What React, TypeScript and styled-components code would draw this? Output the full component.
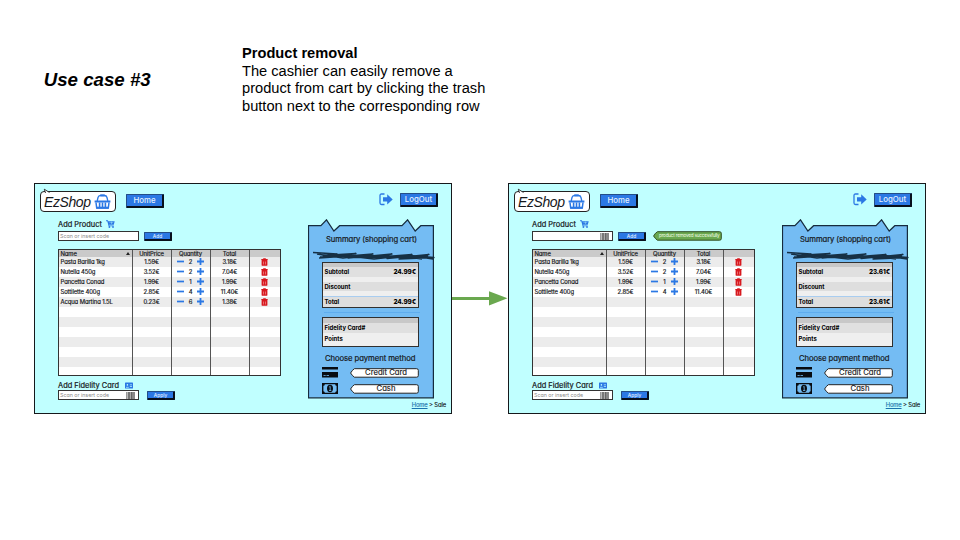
import React from "react";
import styled, { createGlobalStyle } from "styled-components";

const GlobalStyle = createGlobalStyle`
  html, body { margin: 0; background: #fff; overflow: hidden; }
  * { box-sizing: border-box; }
  svg { display: block; flex: none; }
`;

const BLUE = "#2b78e4";
const INK = "#16181b";

const Slide = styled.main`
  width: 960px;
  height: 540px;
  padding-left: 34px;
  font-family: "Liberation Sans", Arial, sans-serif;
  color: #000;
  background: #fff;
`;
const Intro = styled.header`
  display: grid;
  grid-template-columns: 208px 270px;
  height: 183px;
`;
const Title = styled.h1`
  margin: 69px 0 0 9.7px;
  font-size: 18.7px;
  line-height: 22px;
  font-style: italic;
  font-weight: 700;
  white-space: nowrap;
`;
const Description = styled.div`
  padding-top: 45px;
  font-size: 14.65px;
  line-height: 17.5px;
  white-space: nowrap;
`;
const Flow = styled.div`
  display: grid;
  grid-template-columns: 418px 56px 418px;
  height: 231px;
`;
const ArrowCell = styled.div`
  padding-top: 107px;
`;

const Screen = styled.section`
  display: grid;
  grid-template-rows: 35px 180px 14px;
  height: 231px;
  border: 1px solid ${INK};
  background: #c0ffff;
  font-family: Inter, "Noto Sans", sans-serif;
  font-feature-settings: "cv11" 1, "ss03" 1;
  color: ${INK};
  white-space: nowrap;
`;
const TopBar = styled.div`
  display: flex;
  align-items: flex-start;
  padding: 7px 13px 0 5px;
`;
const Logo = styled.div`
  position: relative;
  display: flex;
  align-items: center;
  width: 75.5px;
  height: 21px;
  padding-left: 3px;
  border: 1px solid #222;
  border-radius: 4px;
  background: #fff;
  font: italic 14px/20px "Liberation Sans", sans-serif;
  letter-spacing: -0.4px;
  svg { margin-left: 3px; }
`;
const Tail = styled.svg`
  position: absolute;
  left: -3px;
  top: -4px;
`;
const Button = styled.button<{ $w: number; $h: number; $size: number }>`
  width: ${(p) => p.$w}px;
  height: ${(p) => p.$h}px;
  padding: 0;
  border: solid;
  border-width: 1px 2px 2px 1px;
  border-color: #234e88 #08101c #08101c #234e88;
  border-radius: 1px;
  background: ${BLUE};
  color: #e6f1ff;
  font: 500 ${(p) => p.$size}px/1 Inter, sans-serif;
  font-feature-settings: inherit;
  display: flex;
  align-items: center;
  justify-content: center;
`;
const HomeSlot = styled.div`
  margin: 3px auto 0 10.500px;
`;
const ExitSlot = styled.div`
  display: flex;
  gap: 7px;
  padding-top: 2px;
`;
const Body = styled.div`
  display: grid;
  grid-template-columns: 223px 127px;
  column-gap: 27px;
  padding-left: 23px;
`;
const Caption = styled.div<{ $gap: number; $shift: number }>`
  display: flex;
  align-items: center;
  gap: ${(p) => p.$gap}px;
  height: 12px;
  font-size: 7.45px;
  -webkit-text-stroke: 0.2px ${INK};
  padding-top: ${(p) => Math.max(0, p.$shift)}px;
  padding-bottom: ${(p) => Math.max(0, -p.$shift)}px;
`;
const FieldRow = styled.div<{ $gap: number }>`
  display: flex;
  align-items: flex-end;
  gap: ${(p) => p.$gap}px;
  height: 10px;
`;
const Field = styled.div`
  display: flex;
  align-items: center;
  justify-content: space-between;
  width: 81px;
  height: 10px;
  padding: 0 3px 0 1px;
  border: 1px solid #333;
  border-right-width: 1.5px;
  background: #fff;
  color: #8b8b8b;
  font-size: 5.3px;
  line-height: 8px;
`;
const Barcode = styled.span`
  width: 9px;
  height: 7px;
  margin-left: auto;
  background: linear-gradient(90deg, #999 0 1px, #bbb 1px 2px, #777 2px 4px, #aaa 4px 5px, #666 5px 6px, #888 6px 9px);
`;
const Notice = styled.div`
  position: relative;
  width: 70px;
  height: 10px;
  margin-left: 2px;
  padding-left: 6px;
  color: #f3ffe9;
  font-size: 4.65px;
  letter-spacing: -0.21px;
  line-height: 9.5px;
  span { position: relative; }
  svg { position: absolute; left: 0; top: 0; }
`;
const Table = styled.div`
  display: grid;
  grid-template-rows: 7px;
  grid-auto-rows: 10px;
  width: 223px;
  height: 127px;
  margin: 8px 0 2px;
  overflow: hidden;
  border: 1px solid #333;
  border-right-width: 1.5px;
  background: #fff;
`;
const Row = styled.div<{ $tone: string }>`
  display: grid;
  grid-template-columns: 74px 39px 39px 39px 1fr;
  background: ${(p) => p.$tone};
  font-size: 5.9px;
  letter-spacing: -0.1px;
`;
const Cell = styled.div<{ $left?: boolean }>`
  display: flex;
  align-items: center;
  justify-content: ${(p) => (p.$left ? "space-between" : "center")};
  gap: 4px;
  padding: 0 2px ${(p) => (p.$left ? 1 : 0.8)}px ${(p) => (p.$left ? 1.5 : 1)}px;
  border-right: 1px solid #555;
  line-height: 7px;
  -webkit-text-stroke: 0.18px ${INK};
  &:last-child { border-right: 0; padding-right: 2px; }
`;
const Digit = styled.span`
  width: 5px;
  text-align: center;
`;

const Receipt = styled.div`
  position: relative;
  display: flex;
  flex-direction: column;
  width: 127px;
  height: 180px;
  padding: 0 14px 0 14px;
`;
const Backdrop = styled.svg`
  position: absolute;
  left: 0;
  top: 0;
`;
const ReceiptTitle = styled.div<{ $top: number; $spacing: number; $left: number }>`
  position: relative;
  height: 10px;
  margin: ${(p) => p.$top}px 0 0 ${(p) => p.$left}px;
  font-size: 7.7px;
  line-height: 10px;
  letter-spacing: ${(p) => p.$spacing}px;
  -webkit-text-stroke: 0.2px ${INK};
`;
const Sheet = styled.div<{ $top: number; $h: number; $bands: string }>`
  position: relative;
  width: 97px;
  height: ${(p) => p.$h}px;
  margin-top: ${(p) => p.$top}px;
  padding: 5px 2px 0 1.500px;
  border: 1px solid #303030;
  background: linear-gradient(${(p) => p.$bands});
  font-size: 5.95px;
  font-weight: 700;
`;
const SheetLine = styled.div<{ $h: number }>`
  display: flex;
  align-items: center;
  justify-content: space-between;
  height: ${(p) => p.$h}px;
  line-height: 8px;
  color: #000;
`;
const Amount = styled.b`
  font-size: 6.4px;
  letter-spacing: -0.1px;
  font-weight: 800;
`;
const PayRow = styled.div<{ $top: number }>`
  position: relative;
  display: flex;
  justify-content: space-between;
  align-items: center;
  height: 11px;
  width: 97px;
  margin-top: ${(p) => p.$top}px;
`;
const PayButton = styled.div`
  position: relative;
  width: 69px;
  height: 10px;
  padding-left: 3px;
  text-align: center;
  font-size: 7.7px;
  line-height: 9px;
  -webkit-text-stroke: 0.15px ${INK};
  span { position: relative; }
  svg { position: absolute; left: 0; top: 0; }
`;
const Crumbs = styled.div`
  padding: 2px 5px 0 0;
  text-align: right;
  font-size: 5.8px;
  line-height: 8px;
  letter-spacing: -0.1px;
  -webkit-text-stroke: 0.15px;
  a { color: #1b73ae; text-decoration: underline; }
`;

const Basket = () => (
  <svg width="17" height="16" viewBox="0 0 17 16" fill="none" stroke={BLUE}>
    <path d="M3.200 7 4 3.500Q4.500 1.500 6.500 1.500h4Q12.500 1.500 13 3.500L13.800 7" strokeWidth="1.300" />
    <path d="M6.300 1.400h4.400" strokeWidth="2" />
    <path d="M.6 7.500h15.800" strokeWidth="2" />
    <path d="M2 8.500 2.700 14h11.600l.7-5.500" strokeWidth="1.500" />
    <path d="M5.600 8.500v5M8.500 8.500v5M11.400 8.500v5" strokeWidth="1.600" />
    <path d="M2.500 13.700h12" strokeWidth="2" />
  </svg>
);
const Cart = () => (
  <svg width="9" height="8" viewBox="0 0 9 8" fill={BLUE}>
    <path d="M0 .3h1.900l.4 1H8.700L7.800 4.700H3.200l.2.700h4.300v.8H2.600L1.300 1.200H0z" />
    <circle cx="3.400" cy="7" r=".9" /><circle cx="7" cy="7" r=".9" />
    <path d="M3.400 2.600h3.800M5.500 1.600v2.500" stroke="#c0ffff" strokeWidth=".4" />
  </svg>
);
const Trash = () => (
  <svg width="7" height="8" viewBox="0 0 7 8">
    <path d="M2.200.3h2.600v.6H6.700v1.200H.3V.9h1.900zM.6 2h5.800v4.900q0 .9-.9.900H1.500q-.9 0-.9-.9z" fill="#d7191f" />
    <path d="M2.500 3.500v3M4.500 3.500v3" stroke="#f7a3a3" strokeWidth=".6" />
  </svg>
);
const Minus = () => (
  <svg width="7" height="7" viewBox="0 0 7 7"><path d="M0 3.500h7" stroke={BLUE} strokeWidth="1.700" /></svg>
);
const Plus = () => (
  <svg width="7" height="7" viewBox="0 0 7 7"><path d="M0 3.500h7M3.500 0v7" stroke={BLUE} strokeWidth="1.800" /></svg>
);
const Exit = () => (
  <svg width="14" height="13" viewBox="0 0 14 13">
    <path d="M5.500 1H2.500Q1 1 1 2.500v7.500Q1 11.500 2.500 11.500h3" fill="none" stroke={BLUE} strokeWidth="1.300" />
    <path d="M4 4.300h4.200V1.300L13.700 6.400 8.200 11.500V8.500H4z" fill={BLUE} />
  </svg>
);
const IdCard = () => (
  <svg width="8" height="7" viewBox="0 0 8 7">
    <rect y=".5" width="8" height="6" rx=".6" fill={BLUE} />
    <circle cx="2.400" cy="2.900" r=".8" fill="#c0ffff" />
    <path d="M1 5.300h2.800M4.800 2.800H7M4.800 4.500H7" stroke="#c0ffff" strokeWidth=".7" />
  </svg>
);
const CreditCard = () => (
  <svg width="16" height="11" viewBox="0 0 16 11">
    <path d="M0 0h16V2.500H0zM0 5h16v5.500H0z" fill="#080c12" />
    <path d="M1.500 8.500h2.200M4.500 8.500h2.500" stroke="#74bcf3" strokeWidth=".8" />
  </svg>
);
const Banknote = () => (
  <svg width="16" height="11" viewBox="0 0 16 11">
    <rect width="16" height="11" fill="#080c12" />
    <path d="M2.800 1.300h10.400q0 1.500 1.400 1.500v5.400q-1.400 0-1.400 1.500H2.800q0-1.500-1.400-1.500V2.800q1.400 0 1.400-1.500z" fill="#74bcf3" />
    <ellipse cx="8" cy="5.500" rx="3" ry="3.700" fill="#080c12" />
    <path d="M7.200 4 8.200 3.400v4M7 7.500h2.300" fill="none" stroke="#74bcf3" strokeWidth=".8" />
  </svg>
);
const Tag = ({ fill, stroke }: { fill: string; stroke: string }) => (
  <svg width="69" height="10" viewBox="0 0 70 10" preserveAspectRatio="none">
    <path d="M4.500.7H67.500Q69.300.7 69.300 2.300V7.700Q69.300 9.200 67.500 9.200H4.500Q2.500 8 .6 5 2.500 1.800 4.500.7z" fill={fill} stroke={stroke} />
  </svg>
);
const ReceiptPaper = () => (
  <Backdrop width="127" height="180" viewBox="0 0 127 180">
    <path d="M.5 6.700H12.900L18.500.8 25.900 12 31.600 6.700H94L99.600.8 107.200 12 112.800 6.700H125.400V178.800H.5z" fill="#74bcf3" stroke="#162b3d" strokeWidth="1.200" />
    <path d="M16 93.500H112" stroke="#4b9fea" strokeWidth=".7" opacity=".7" />
    <path d="M5 33.500 29 35 15 36.500 48 34.500 26 38 65 35 40 39 84 35 57 39 104 35.500 79 39.500 121 35.500 91 40 126 38.500 102 36.500 125 40M11 39 40 37 66 40 93 37 114 40M9 35 35 39 60 36 80 38 110 37 126 40M12 38 30 36.500 50 38.500 75 36.500 100 38.500 120 37" fill="none" stroke="#163044" strokeWidth="1.300" strokeLinejoin="round" />
  </Backdrop>
);

type Item = [string, string, string, string];
const cart: Item[] = [
  ["Pasta Barilla 1kg", "1.59€", "2", "3.18€"],
  ["Nutella 450g", "3.52€", "2", "7.04€"],
  ["Pancetta Conad", "1.99€", "1", "1.99€"],
  ["Sottilette 400g", "2.85€", "4", "11.40€"],
  ["Acqua Martina 1.5L", "0.23€", "6", "1.38€"],
];

function SaleScreen({ items, total, removed }: { items: Item[]; total: string; removed?: boolean }) {
  return (
    <Screen>
      <TopBar>
        <Logo>
          <Tail width="9" height="8" viewBox="0 0 9 8">
            <path d="M4.500 5 3.300 1.200 8.500 4.500" fill="#fff" stroke="#222" strokeWidth=".9" />
          </Tail>
          EzShop
          <Basket />
        </Logo>
        <HomeSlot><Button $w={38} $h={14} $size={7.8}>Home</Button></HomeSlot>
        <ExitSlot><Exit /><Button $w={38} $h={14} $size={7.8}>LogOut</Button></ExitSlot>
      </TopBar>
      <Body>
        <div>
          <Caption $gap={4} $shift={-2}>Add Product <Cart /></Caption>
          <FieldRow $gap={5}>
            <Field>{removed ? <Barcode /> : "Scan or insert code"}</Field>
            <Button $w={28} $h={9} $size={4.8}>Add</Button>
            {removed && <Notice><Tag fill="#6aa84f" stroke="#304f24" /><span>product removed successfully</span></Notice>}
          </FieldRow>
          <Table>
            <Row $tone="#cacaca">
              <Cell $left>Name <svg width="4" height="3" viewBox="0 0 4 3"><path d="M0 3 2 0 4 3z" fill="#222" /></svg></Cell>
              <Cell>UnitPrice</Cell><Cell>Quantity</Cell><Cell>Total</Cell><Cell />
            </Row>
            {Array.from({ length: 12 }, (_, i) => {
              const it = items[i];
              return (
                <Row key={i} $tone={i % 2 ? "#fff" : "#ececec"}>
                  <Cell $left>{it?.[0]}</Cell>
                  <Cell>{it?.[1]}</Cell>
                  <Cell>{it && <><Minus /><Digit>{it[2]}</Digit><Plus /></>}</Cell>
                  <Cell>{it?.[3]}</Cell>
                  <Cell>{it && <Trash />}</Cell>
                </Row>
              );
            })}
          </Table>
          <Caption $gap={6} $shift={3}>Add Fidelity Card <IdCard /></Caption>
          <FieldRow $gap={8}>
            <Field>Scan or insert code <Barcode /></Field>
            <Button $w={28} $h={9} $size={4.8}>Apply</Button>
          </FieldRow>
        </div>
        <Receipt>
          <ReceiptPaper />
          <ReceiptTitle $top={16} $left={4} $spacing={-0.1}>Summary (shopping cart)</ReceiptTitle>
          <Sheet $top={17} $h={46} $bands="#c8c8c8 0 4px, #e0e0e0 4px 14px, #efefef 14px 19px, #dedede 19px 28px, #efefef 28px 33px, #a9cdf0 33px 34px, #dedede 34px">
            <SheetLine $h={8}>Subtotal <Amount>{total}</Amount></SheetLine>
            <SheetLine $h={22}>Discount</SheetLine>
            <SheetLine $h={8}>Total <Amount>{total}</Amount></SheetLine>
          </Sheet>
          <Sheet $top={9} $h={30} $bands="#c8c8c8 0 5px, #e0e0e0 5px 15px, #efefef 15px">
            <SheetLine $h={10}>Fidelity Card#</SheetLine>
            <SheetLine $h={11}>Points</SheetLine>
          </Sheet>
          <ReceiptTitle $top={7} $left={3} $spacing={-0.07}>Choose payment method</ReceiptTitle>
          <PayRow $top={3}><CreditCard /><PayButton><Tag fill="#fff" stroke="#222" /><span>Credit Card</span></PayButton></PayRow>
          <PayRow $top={5}><Banknote /><PayButton><Tag fill="#fff" stroke="#222" /><span>Cash</span></PayButton></PayRow>
        </Receipt>
      </Body>
      <Crumbs><a>Home</a> &gt; Sale</Crumbs>
    </Screen>
  );
}

export default function App() {
  return (
    <>
      <GlobalStyle />
      <Slide>
        <Intro>
          <Title>Use case #3</Title>
          <Description>
            <b>Product removal</b><br />
            The cashier can easily remove a<br />
            product from cart by clicking the trash<br />
            button next to the corresponding row
          </Description>
        </Intro>
        <Flow>
          <SaleScreen items={cart} total="24.99€" />
          <ArrowCell>
            <svg width="56" height="16" viewBox="0 0 56 16">
              <path d="M0 7h37V1.200L55.500 8.300 37 15.500V10H0z" fill="#6aa84f" />
            </svg>
          </ArrowCell>
          <SaleScreen items={cart.slice(0, 4)} total="23.61€" removed />
        </Flow>
      </Slide>
    </>
  );
}
